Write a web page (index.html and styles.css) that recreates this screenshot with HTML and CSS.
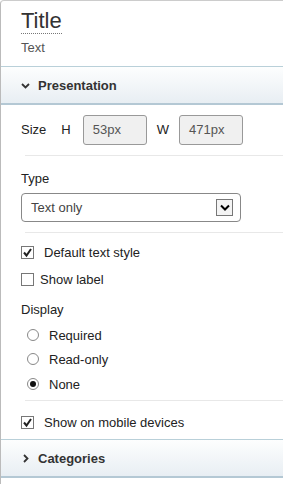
FILE: index.html
```html
<!DOCTYPE html>
<html>

<head>
  <link rel="stylesheet" href="styles.css">
</head>

<body>
  <div class="panel">
    <div class="head">
      <div class="title">Title</div>
      <div class="subtitle">Text</div>
    </div>

    <div class="section-bar">
      <svg class="chev" width="9" height="9" viewBox="0 0 9 9"><path d="M1 3 L4.5 6.5 L8 3" fill="none" stroke="#333" stroke-width="1.8"/></svg>
      <span>Presentation</span>
    </div>

    <div class="body">
      <div class="row size-row">
        <span class="lbl">Size</span>
        <span class="lbl dim">H</span>
        <div class="field">53px</div>
        <span class="lbl dim">W</span>
        <div class="field">471px</div>
      </div>
      <div class="sep"></div>

      <div class="group">
        <div class="lbl">Type</div>
        <div class="select">
          <span>Text only</span>
          <span class="drop">
            <svg width="10" height="7" viewBox="0 0 10 7"><path d="M1 1.5 L5 5.5 L9 1.5" fill="none" stroke="#000" stroke-width="2"/></svg>
          </span>
        </div>
      </div>
      <div class="sep"></div>

      <label class="check wide"><span class="box on"><svg width="11" height="11" viewBox="0 0 11 11"><path d="M2 5.5 L4.5 8.5 L9 2" fill="none" stroke="#222" stroke-width="2"/></svg></span>Default text style</label>
      <label class="check"><span class="box"></span>Show label</label>

      <div class="group display">
        <div class="lbl">Display</div>
        <label class="radio"><span class="dot"></span>Required</label>
        <label class="radio"><span class="dot"></span>Read-only</label>
        <label class="radio"><span class="dot on"></span>None</label>
      </div>
      <div class="sep tight"></div>

      <label class="check wide mobile"><span class="box on"><svg width="11" height="11" viewBox="0 0 11 11"><path d="M2 5.5 L4.5 8.5 L9 2" fill="none" stroke="#222" stroke-width="2"/></svg></span>Show on mobile devices</label>
    </div>

    <div class="section-bar closed">
      <svg class="chev" width="9" height="9" viewBox="0 0 9 9"><path d="M3 1 L6.5 4.5 L3 8" fill="none" stroke="#333" stroke-width="1.8"/></svg>
      <span>Categories</span>
    </div>
  </div>
</body>

</html>
```

FILE: styles.css
```css
* {
  box-sizing: border-box;
}

body {
  margin: 0;
  font-family: "Liberation Sans", Arial, sans-serif;
  font-size: 13px;
  color: #222;
  background: #fff;
}

.panel {
  height: 484px;
  border-left: 1px solid #bbb;
  border-top: 1px solid #ccc;
  border-top-left-radius: 4px;
  overflow: hidden;
}

.head {
  padding: 8px 20px 10px;
}

.title {
  display: inline-block;
  font-size: 22px;
  line-height: 24px;
  color: #333;
  border-bottom: 1px dotted #777;
}

.subtitle {
  margin-top: 6px;
  color: #555;
  line-height: 16px;
}

.section-bar {
  display: flex;
  align-items: center;
  gap: 8px;
  height: 39px;
  padding-left: 20px;
  border-top: 1px solid #b9d0d9;
  border-bottom: 2px solid #b4c8d4;
  background: linear-gradient(#fdfefe, #e8eef3);
  font-weight: bold;
  color: #333;
}

.body {
  padding: 10px 0 7px 20px;
}

.row {
  display: flex;
  align-items: center;
}

.size-row {
  height: 30px;
}

.lbl {
  line-height: 16px;
}

.size-row .lbl {
  margin-right: 12px;
}

.size-row .lbl:first-child {
  margin-right: 15px;
}

.field {
  width: 64px;
  height: 30px;
  padding: 6px 9px;
  margin-right: 10px;
  background: #f0f0f0;
  border: 1px solid #999;
  border-radius: 3px;
  color: #555;
}

.size-row .dim:nth-child(4) {
  margin-right: 10px;
}

.sep {
  height: 1px;
  background: #e8e8e8;
  margin: 10px 0 0 4px;
}

.sep.tight {
  margin-top: 8px;
}

.group {
  padding-top: 15px;
}

.select {
  display: flex;
  align-items: center;
  justify-content: space-between;
  width: 220px;
  height: 29px;
  margin-top: 6px;
  padding: 0 7px 0 9px;
  border: 1px solid #888;
  border-radius: 4px;
  color: #444;
}

.drop {
  display: flex;
  align-items: center;
  justify-content: center;
  width: 17px;
  height: 17px;
  border: 1px solid #777;
  background: #f4f4f4;
}

.check {
  display: flex;
  align-items: center;
  gap: 6px;
  height: 16px;
  margin-top: 11px;
}

.check.wide {
  gap: 10px;
  margin-top: 11px;
}

.check + .check {
  margin-top: 11px;
}

.box {
  display: flex;
  align-items: center;
  justify-content: center;
  width: 13px;
  height: 13px;
  border: 1px solid #777;
  background: #fff;
}

.display {
  padding-top: 15px;
}

.radio {
  display: flex;
  align-items: center;
  gap: 10px;
  height: 16px;
  margin: 8px 0 0 6px;
}

.display .radio:first-of-type {
  margin-top: 9px;
}

.radio:last-child {
  margin-top: 9px;
}

.dot {
  width: 12px;
  height: 12px;
  border: 1px solid #888;
  border-radius: 50%;
  background: #fff;
  display: flex;
  align-items: center;
  justify-content: center;
}

.dot.on::after {
  content: "";
  width: 6px;
  height: 6px;
  border-radius: 50%;
  background: #111;
}

.check.mobile {
  margin-top: 13px;
}

.closed {
  margin-top: 2px;
}
```
